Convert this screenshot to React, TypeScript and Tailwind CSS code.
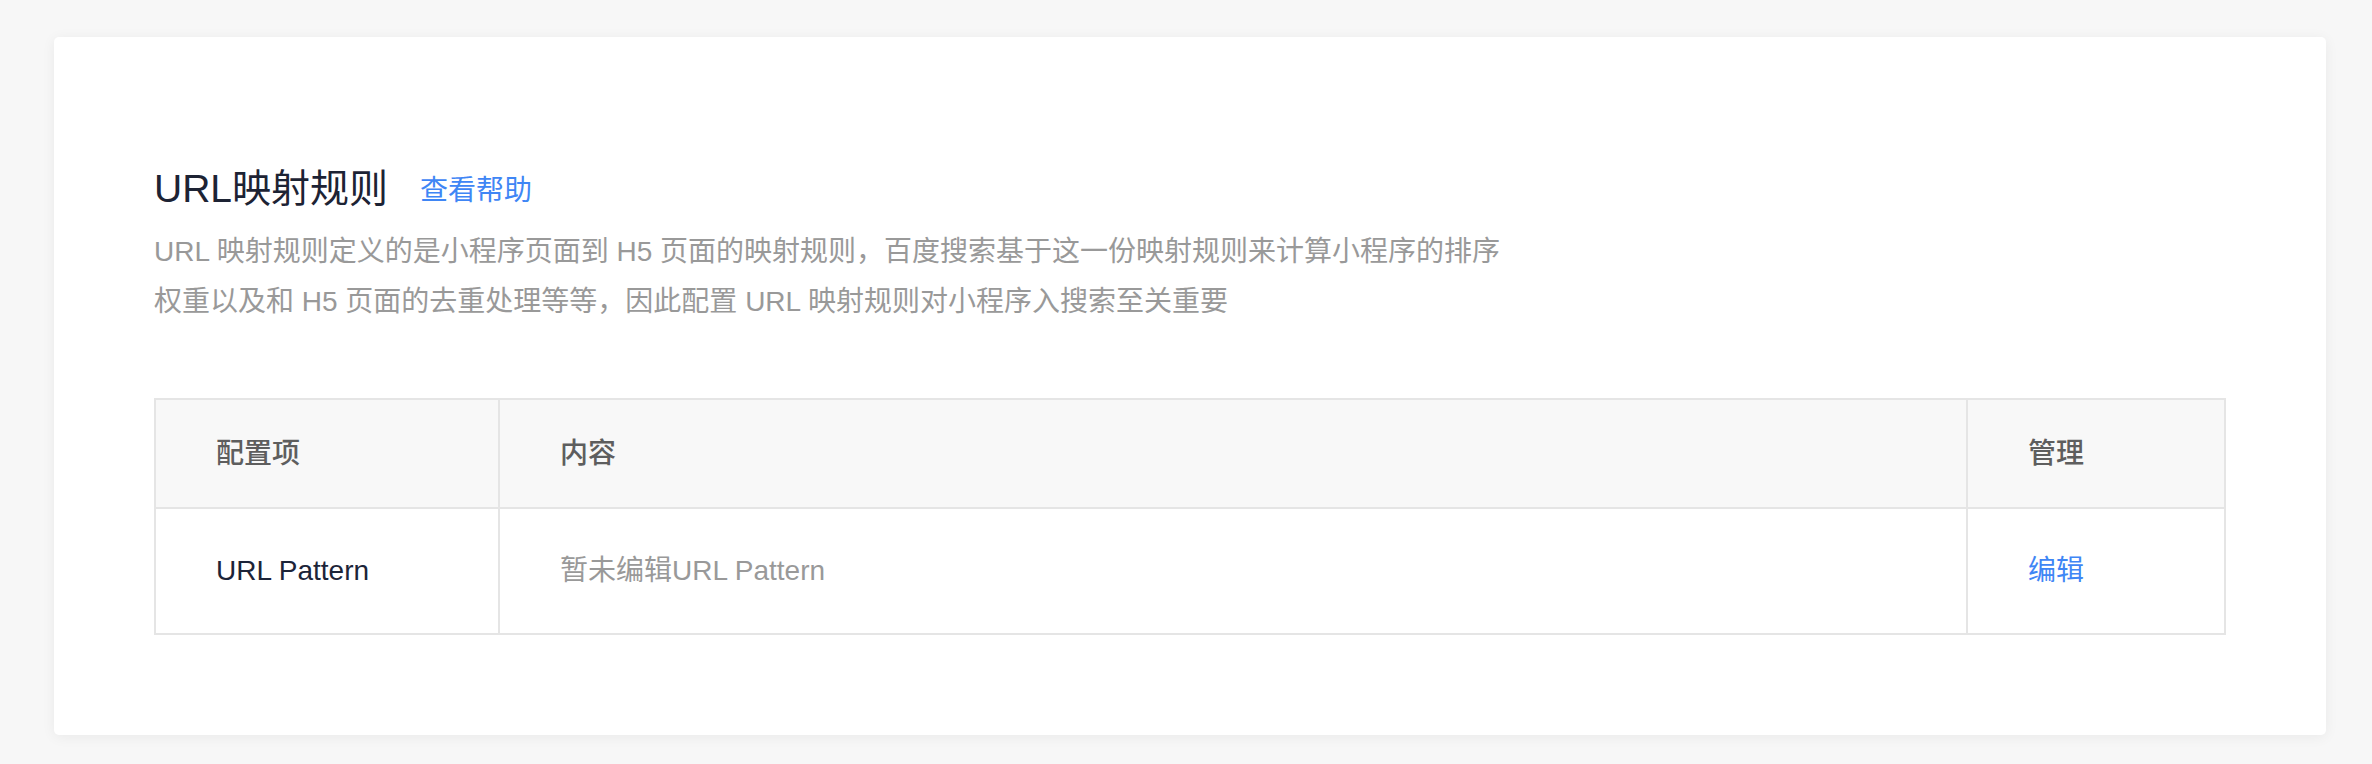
import React from "react";

const FONT = '"Liberation Sans", "Noto Sans CJK SC", sans-serif';

export default function App() {
  return (
    <div
      className="min-h-screen w-full bg-[#f7f7f7] pl-[54px] pr-[46px] pt-[37px] pb-[60px]"
      style={{ fontFamily: FONT }}
    >
      <div className="rounded-[5px] bg-white px-[100px] pt-[124px] pb-[100px] shadow-[0_2px_14px_rgba(0,0,0,0.06)]">
        <div className="flex items-center">
          <h1 className="text-[39px] leading-[56px] font-normal text-[#1d2334]">URL映射规则</h1>
          <a className="ml-[32px] mt-[4px] text-[28px] leading-[40px] text-[#3f86f5] cursor-pointer">查看帮助</a>
        </div>
        <p className="mt-[10px] text-[28px] leading-[50px] text-[#999999]">
          URL 映射规则定义的是小程序页面到 H5 页面的映射规则，百度搜索基于这一份映射规则来计算小程序的排序
          <br />
          权重以及和 H5 页面的去重处理等等，因此配置 URL 映射规则对小程序入搜索至关重要
        </p>
        <table className="mt-[71px] w-full table-fixed border-collapse border-2 border-[#e5e5e5] text-[28px]">
          <colgroup>
            <col className="w-[344px]" />
            <col />
            <col className="w-[258px]" />
          </colgroup>
          <thead>
            <tr className="bg-[#f8f8f8]">
              <th className="h-[109px] border-2 border-[#e5e5e5] pl-[60px] text-left font-medium text-[#5e5e5e]">配置项</th>
              <th className="h-[109px] border-2 border-[#e5e5e5] pl-[60px] text-left font-medium text-[#5e5e5e]">内容</th>
              <th className="h-[109px] border-2 border-[#e5e5e5] pl-[60px] text-left font-medium text-[#5e5e5e]">管理</th>
            </tr>
          </thead>
          <tbody>
            <tr>
              <td className="h-[126px] border-2 border-[#e5e5e5] pl-[60px] text-[#1c2438]">URL Pattern</td>
              <td className="h-[126px] border-2 border-[#e5e5e5] pl-[60px] text-[#999999]">暂未编辑URL Pattern</td>
              <td className="h-[126px] border-2 border-[#e5e5e5] pl-[60px]">
                <a className="cursor-pointer text-[#3f86f5]">编辑</a>
              </td>
            </tr>
          </tbody>
        </table>
      </div>
    </div>
  );
}
